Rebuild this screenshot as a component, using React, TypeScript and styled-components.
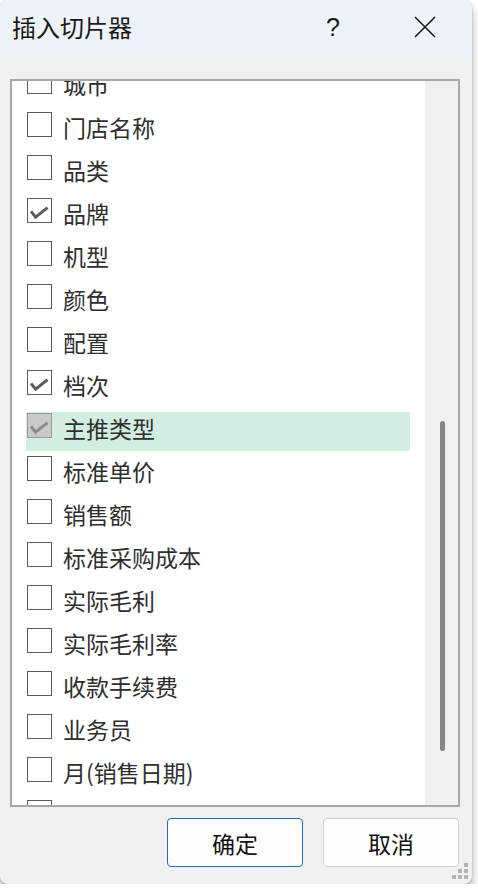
import styled, { createGlobalStyle } from 'styled-components';

const GlobalStyle = createGlobalStyle`
  html, body {
    margin: 0;
    padding: 0;
    background: #ffffff;
  }
  body {
    font-family: "Noto Sans CJK SC", "Noto Sans", sans-serif;
  }
`;

interface Field {
  name: string;
  checked?: boolean;
  locked?: boolean;
}

const fields: Field[] = [
  { name: '城市' },
  { name: '门店名称' },
  { name: '品类' },
  { name: '品牌', checked: true },
  { name: '机型' },
  { name: '颜色' },
  { name: '配置' },
  { name: '档次', checked: true },
  { name: '主推类型', checked: true, locked: true },
  { name: '标准单价' },
  { name: '销售额' },
  { name: '标准采购成本' },
  { name: '实际毛利' },
  { name: '实际毛利率' },
  { name: '收款手续费' },
  { name: '业务员' },
  { name: '月(销售日期)' },
  { name: '年(销售日期)' },
];

function CheckMark({ color }: { color: string }) {
  return (
    <svg width="23" height="23" viewBox="0 0 23 23">
      <path d="M3 12.3 L7.6 18.2 L19.6 8.6" fill="none" stroke={color} strokeWidth="3" />
    </svg>
  );
}

function Grip() {
  const dots = [
    [12, 0],
    [6, 6],
    [12, 6],
    [0, 12],
    [6, 12],
    [12, 12],
  ];
  return (
    <Styled.Grip width="16" height="16" viewBox="0 0 16 16">
      {dots.map(([x, y]) => (
        <rect key={`${x}-${y}`} x={x} y={y} width="4" height="4" fill="#b4b4b4" />
      ))}
    </Styled.Grip>
  );
}

function App() {
  // list is scrolled a little past its first row
  const scrollTop = 13;
  const thumbTop = 340;
  const thumbHeight = 330;

  return (
    <>
      <GlobalStyle />
      <Styled.Window>
        <Styled.TitleBar>
          <Styled.Title>插入切片器</Styled.Title>
          <Styled.TitleButton>?</Styled.TitleButton>
          <Styled.CloseButton>
            <svg width="22" height="22" viewBox="0 0 22 22">
              <path d="M1 1 L21 21 M21 1 L1 21" stroke="#1a1a1a" strokeWidth="1.6" />
            </svg>
          </Styled.CloseButton>
        </Styled.TitleBar>

        <Styled.Body>
          <Styled.ListBox>
            <Styled.ListArea>
              <Styled.List style={{ marginTop: -scrollTop }}>
                {fields.map((f) => (
                  <Styled.Row key={f.name} highlighted={!!f.locked}>
                    <Styled.Box locked={!!f.locked}>
                      {f.checked && <CheckMark color={f.locked ? '#8a8a8a' : '#5c5c5c'} />}
                    </Styled.Box>
                    <Styled.Label>{f.name}</Styled.Label>
                  </Styled.Row>
                ))}
              </Styled.List>
            </Styled.ListArea>
            <Styled.Track>
              <Styled.Thumb style={{ marginTop: thumbTop, height: thumbHeight }} />
            </Styled.Track>
          </Styled.ListBox>

          <Styled.Buttons>
            <Styled.Button primary>确定</Styled.Button>
            <Styled.Button>取消</Styled.Button>
          </Styled.Buttons>
        </Styled.Body>
        <Grip />
      </Styled.Window>
    </>
  );
}

export default App;

const Styled = {
  Window: styled.div`
    position: relative;
    width: 472px;
    height: 884px;
    border-radius: 8px;
    overflow: hidden;
    background: #f0f0f0;
    box-shadow: 0 7px 10px rgba(0, 0, 0, 0.32), 0 0 2px rgba(0, 0, 0, 0.2);
    display: flex;
    flex-direction: column;
  `,
  TitleBar: styled.div`
    height: 56px;
    flex-shrink: 0;
    display: flex;
    align-items: center;
    background: #eef2f9;
    padding-left: 12px;
  `,
  Title: styled.div`
    flex: 1;
    font-size: 24px;
    color: #1a1a1a;
    line-height: 32px;
    margin-top: -3px;
  `,
  TitleButton: styled.div`
    width: 22px;
    margin-right: 70px;
    text-align: center;
    font-family: "Liberation Sans", Arial, sans-serif;
    font-size: 25px;
    color: #1a1a1a;
    margin-top: -2px;
  `,
  CloseButton: styled.div`
    display: flex;
    align-items: center;
    margin-right: 36px;
    margin-top: -3px;
  `,
  Body: styled.div`
    flex: 1;
    display: flex;
    flex-direction: column;
    padding: 23px 12px 0 10px;
  `,
  ListBox: styled.div`
    height: 724px;
    display: flex;
    border: 2px solid #a7a7a7;
    background: #ffffff;
    overflow: hidden;
  `,
  ListArea: styled.div`
    flex: 1;
    overflow: hidden;
  `,
  List: styled.div`
    display: flex;
    flex-direction: column;
    gap: 4px;
    padding-left: 14px;
  `,
  Row: styled.div<{ highlighted: boolean }>`
    width: 384px;
    height: 39px;
    flex-shrink: 0;
    display: flex;
    align-items: flex-start;
    padding-top: 1px;
    box-sizing: border-box;
    background: ${({ highlighted }) => (highlighted ? '#d2eee0' : 'transparent')};
  `,
  Box: styled.div<{ locked: boolean }>`
    width: 25px;
    height: 25px;
    margin-left: 1px;
    box-sizing: border-box;
    border: 1px solid ${({ locked }) => (locked ? '#9a9a9a' : '#5a5a5a')};
    background: ${({ locked }) => (locked ? '#c9c9c9' : '#ffffff')};
    display: flex;
  `,
  Label: styled.span`
    margin-left: 11px;
    font-size: 23px;
    line-height: 30px;
    color: #2e2e2e;
    white-space: nowrap;
  `,
  Track: styled.div`
    width: 33px;
    background: #f0f0f0;
    display: flex;
    justify-content: center;
  `,
  Thumb: styled.div`
    width: 5px;
    border-radius: 3px;
    background: #858585;
    margin-left: 1px;
  `,
  Buttons: styled.div`
    display: flex;
    justify-content: flex-end;
    gap: 20px;
    margin-top: 11px;
    padding-right: 1px;
  `,
  Button: styled.button<{ primary?: boolean }>`
    width: 136px;
    height: 49px;
    box-sizing: border-box;
    border-radius: 4px;
    border: 1px solid ${({ primary }) => (primary ? '#1a6fc0' : '#d0d0d0')};
    background: #fdfdfd;
    font-family: "Noto Sans CJK SC", sans-serif;
    font-size: 23px;
    color: #111111;
    padding: 0;
  `,
  Grip: styled.svg`
    position: absolute;
    right: 4px;
    bottom: 5px;
  `,
};
